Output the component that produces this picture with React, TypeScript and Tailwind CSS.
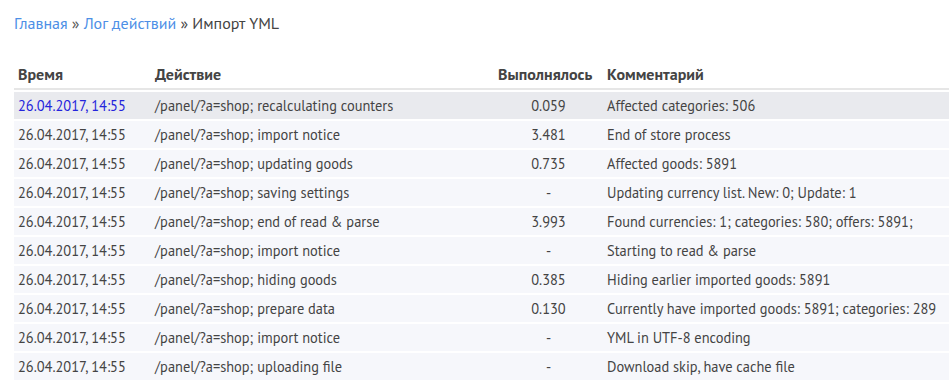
const ROWS = [
  { action: 'recalculating counters', time: '0.059', comment: 'Affected categories: 506' },
  { action: 'import notice', time: '3.481', comment: 'End of store process' },
  { action: 'updating goods', time: '0.735', comment: 'Affected goods: 5891' },
  { action: 'saving settings', time: '-', comment: 'Updating currency list. New: 0; Update: 1' },
  { action: 'end of read & parse', time: '3.993', comment: 'Found currencies: 1; categories: 580; offers: 5891;' },
  { action: 'import notice', time: '-', comment: 'Starting to read & parse' },
  { action: 'hiding goods', time: '0.385', comment: 'Hiding earlier imported goods: 5891' },
  { action: 'prepare data', time: '0.130', comment: 'Currently have imported goods: 5891; categories: 289' },
  { action: 'import notice', time: '-', comment: 'YML in UTF-8 encoding' },
  { action: 'uploading file', time: '-', comment: 'Download skip, have cache file' },
]

export default function App() {
  return (
    <div className="pl-[14px] text-[14.4px] text-[#444] font-['PT_Sans','Roboto','Liberation_Sans',sans-serif] bg-white min-h-[384px]">
      <div className="pt-[13px] leading-5 text-[16px]">
        <a href="#" className="text-[#4d8fe6]">Главная</a>
        <span className="text-[#555]"> » </span>
        <a href="#" className="text-[#4d8fe6]">Лог действий</a>
        <span className="text-[#444]"> » Импорт YML</span>
      </div>
      <table className="mt-[27px] w-full table-fixed border-separate border-spacing-0">
        <thead>
          <tr className="text-left text-[16px]">
            <th className="w-[137px] h-[30px] px-1 font-bold border-b-2 border-[#e6e6e6]">Время</th>
            <th className="w-[343px] px-1 font-bold border-b-2 border-[#e6e6e6]">Действие</th>
            <th className="w-[109px] px-1 font-bold border-b-2 border-[#e6e6e6]">Выполнялось</th>
            <th className="px-1 font-bold border-b-2 border-[#e6e6e6]">Комментарий</th>
          </tr>
        </thead>
        <tbody>
          {ROWS.map((r, i) => {
            const bg = i === 0 ? 'bg-[#e9eaee]' : 'bg-[#f6f7fb]'
            const td = `${bg} border-t-2 border-white h-[29px] px-1 whitespace-nowrap`
            return (
              <tr key={i}>
                <td className={td}>
                  <span className={i === 0 ? 'text-[#2424dc]' : ''}>26.04.2017, 14:55</span>
                </td>
                <td className={td}>/panel/?a=shop; {r.action}</td>
                <td className={`${td} text-center`}>{r.time}</td>
                <td className={td}>{r.comment}</td>
              </tr>
            )
          })}
        </tbody>
      </table>
    </div>
  )
}
